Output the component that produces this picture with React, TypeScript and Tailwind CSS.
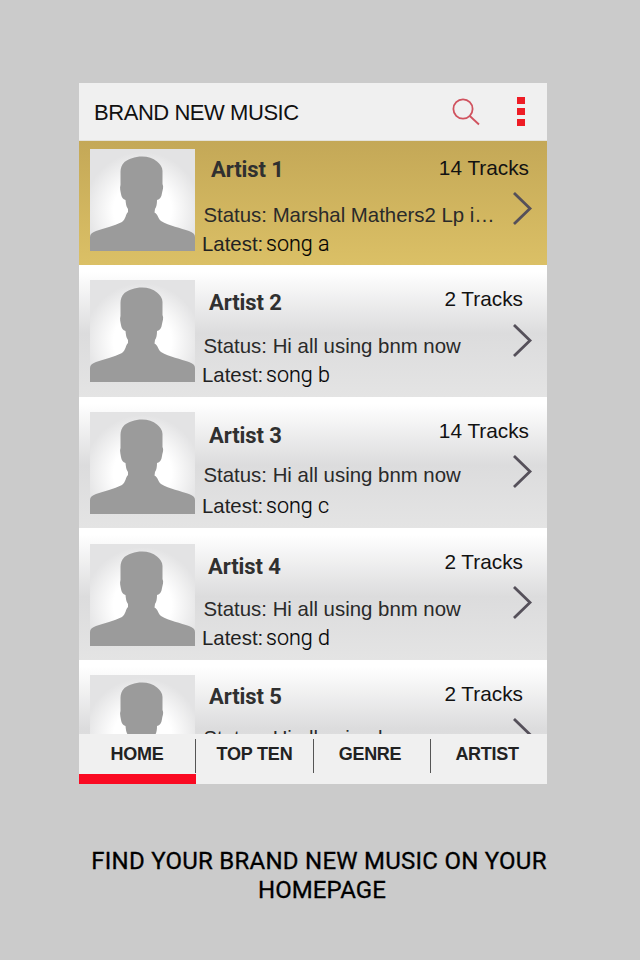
import React from "react";

type Artist = {
  name: string;
  tracks: string;
  status: string;
  song?: string;
  row: string;
  avatar: string;
  head: string;
  nameBox: string;
  tracksBox: string;
  text: string;
  latest: string;
};

const plain = "bg-linear-to-b from-[#ffffff] from-5% via-[#dcdcdd] via-52% to-[#e4e4e4]";

const artists: Artist[] = [
  {
    name: "Artist 1", tracks: "14 Tracks", status: "Status: Marshal Mathers2 Lp i…", song: "song a",
    row: "h-[124px] bg-linear-to-b from-[#c4a857] to-[#dbc066]",
    avatar: "mt-2", head: "h-[51px]", nameBox: "pl-2 pt-[17px]", tracksBox: "pt-[15px] pr-[18px]",
    text: "pt-[11px]", latest: "mt-[5px]",
  },
  {
    name: "Artist 2", tracks: "2 Tracks", status: "Status: Hi all using bnm now", song: "song b",
    row: `h-[132px] ${plain}`,
    avatar: "mt-[15px]", head: "h-[59px]", nameBox: "pl-1.5 pt-[26px]", tracksBox: "pt-[22px] pr-6",
    text: "pt-[10px]", latest: "mt-[5px]",
  },
  {
    name: "Artist 3", tracks: "14 Tracks", status: "Status: Hi all using bnm now", song: "song c",
    row: `h-[131px] ${plain}`,
    avatar: "mt-[15px]", head: "h-[58px]", nameBox: "pl-1.5 pt-[27px]", tracksBox: "pt-[22px] pr-[18px]",
    text: "pt-2", latest: "mt-[7px]",
  },
  {
    name: "Artist 4", tracks: "2 Tracks", status: "Status: Hi all using bnm now", song: "song d",
    row: `h-[132px] ${plain}`,
    avatar: "mt-4", head: "h-[58px]", nameBox: "pl-[5px] pt-[27px]", tracksBox: "pt-[22px] pr-6",
    text: "pt-[11px]", latest: "mt-[5px]",
  },
  {
    name: "Artist 5", tracks: "2 Tracks", status: "Status: Hi all using bnm now",
    row: `h-[132px] ${plain}`,
    avatar: "mt-[15px]", head: "h-[58px]", nameBox: "pl-1.5 pt-[25px]", tracksBox: "pt-[22px] pr-6",
    text: "pt-[8px]", latest: "mt-[5px]",
  },
];

function Avatar({ className }: { className: string }) {
  return (
    <div className={`ml-[11px] h-[102px] w-[105px] shrink-0 bg-[radial-gradient(circle_at_50%_60%,#ffffff_36%,#e3e3e4_72%)] ${className}`}>
      <svg viewBox="0 0 105 102" className="block h-full w-full" fill="#9b9b9b">
        <path d="M52 7.500C45 7.500 38 10 34.500 13C31.500 16 30.500 19 30.500 23V36C29.500 39 30.500 42 31 45C31.500 48 33 50.500 35.500 51C36 55 36 57 38 60V63C35.500 65 36 70 32 73C24 77 14 79 6 82C2 83.500 0 85 0 88V102H105V88C105 85 103 83.500 99 82C91 79 79 77 71 72C68 70 68 65 64.500 63.500L65 60C66.500 58 67 55 67 51C70 50.500 71.500 48 72 44C72.500 41 74 38 72.500 35V22C72.500 18 70 15 67 12.500C63 9 58 7.500 52 7.500Z" />
      </svg>
    </div>
  );
}

function ArtistRow({ a }: { a: Artist }) {
  return (
    <div className={`flex shrink-0 items-start overflow-hidden ${a.row}`}>
      <Avatar className={a.avatar} />
      <div className="ml-2 flex min-w-0 flex-1 flex-col">
        <div className={`flex items-start justify-between whitespace-nowrap ${a.head}`}>
          <div className={a.nameBox}>
            <div className="font-[Roboto,sans-serif] text-[22px] leading-6 font-bold tracking-[-0.1px] text-[#303030]">{a.name}</div>
          </div>
          <div className={`text-[20.8px] leading-6 text-[#121212] ${a.tracksBox}`}>{a.tracks}</div>
        </div>
        <div className="flex items-start justify-between">
          <div className={`whitespace-nowrap ${a.text}`}>
            <div className="pl-[0.5px] text-[20.4px] leading-6 text-[#2a2a2a]">{a.status}</div>
            {a.song && (
              <div className={`flex leading-6 ${a.latest}`}>
                <span className="w-[63px] -indent-px text-[20.4px] text-[#222222]">Latest:</span>
                <span className="font-[Roboto,sans-serif] text-[21.5px] font-light text-black [-webkit-text-stroke:0.15px_#000000]">{a.song}</span>
              </div>
            )}
          </div>
          <svg viewBox="0 0 20 34" className="mr-3.5 h-[34px] w-5 shrink-0" fill="none" stroke="#55505a" strokeWidth="2.8">
            <path d="M1 1L17 16.500L1 32" />
          </svg>
        </div>
      </div>
    </div>
  );
}

export default function App() {
  return (
    <div className="flex h-[960px] w-[640px] flex-col overflow-hidden bg-[#cbcbcb] pt-[83px] font-['Liberation_Sans',Arial,sans-serif]">
      <div className="ml-[79px] flex h-[701px] w-[468px] flex-col bg-[#f0f0f0]">
        <header className="flex h-[58px] shrink-0 items-center border-b border-[#e4e2da] pl-[15px]">
          <h1 className="flex-1 pt-px text-[22px] tracking-[-0.45px] whitespace-nowrap text-[#111111]">BRAND NEW MUSIC</h1>
          <svg viewBox="0 0 28 28" className="mr-[37px] h-7 w-7" fill="none" stroke="#d0525e" strokeWidth="1.8">
            <circle cx="11" cy="11" r="9.600" />
            <path d="M17.800 18L27 26.500" />
          </svg>
          <div className="mr-[22px] flex flex-col gap-1">
            <i className="block h-[7px] w-2 bg-[#ee1c25]" />
            <i className="block h-[7px] w-2 bg-[#ee1c25]" />
            <i className="block h-[7px] w-2 bg-[#ee1c25]" />
          </div>
        </header>
        <main className="flex h-[593px] shrink-0 flex-col overflow-hidden">
          {artists.map((a) => (
            <ArtistRow key={a.name} a={a} />
          ))}
        </main>
        <nav className="grid h-[50px] shrink-0 grid-cols-[117px_118px_117px_116px] text-center text-[18px] leading-10 font-bold text-[#222222]">
          <div className="flex flex-col">
            <div className="flex h-10 items-center">
              <span className="flex-1 tracking-[-0.2px]">HOME</span>
              <i className="mt-1 h-[34px] w-px bg-[#555555]" />
            </div>
            <div className="h-2.5 bg-[#fa0a22]" />
          </div>
          <div className="flex h-10 items-center">
            <span className="flex-1 tracking-[-0.2px]">TOP TEN</span>
            <i className="mt-1 h-[34px] w-px bg-[#555555]" />
          </div>
          <div className="flex h-10 items-center">
            <span className="flex-1 pr-1 tracking-[-0.3px]">GENRE</span>
            <i className="mt-1 h-[34px] w-px bg-[#555555]" />
          </div>
          <span className="pr-1 tracking-[-0.3px]">ARTIST</span>
        </nav>
      </div>
      <p className="mt-[63px] text-center font-[Roboto,sans-serif] text-[24px] leading-[29px] whitespace-nowrap text-black [-webkit-text-stroke:0.3px_#000000]">
        <span className="block pr-0.5 tracking-[0.25px]">FIND YOUR BRAND NEW MUSIC ON YOUR</span>
        <span className="block pl-1 tracking-[0.1px]">HOMEPAGE</span>
      </p>
    </div>
  );
}
